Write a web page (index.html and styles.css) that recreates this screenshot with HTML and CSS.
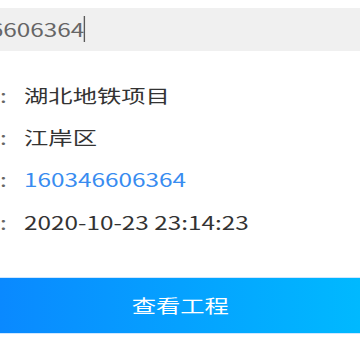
FILE: index.html
```html
<!DOCTYPE html>
<html lang="zh-CN">
<head>
<meta charset="utf-8">
<title>工程详情</title>
<link rel="stylesheet" href="styles.css">
</head>
<body>
<div class="page">
  <div class="search"><span class="search-text">160346606364</span></div>
  <div class="info">
    <div class="row"><span class="label">:</span><span class="value">湖北地铁项目</span></div>
    <div class="row"><span class="label">:</span><span class="value">江岸区</span></div>
    <div class="row"><span class="label">:</span><span class="value phone">160346606364</span></div>
    <div class="row"><span class="label">:</span><span class="value">2020-10-23 23:14:23</span></div>
  </div>
  <div class="btn">查看工程</div>
</div>
</body>
</html>
```
FILE: styles.css
```css
html, body {
  margin: 0;
  padding: 0;
  background: #ffffff;
  overflow: hidden;
}
.page {
  width: 267px;
  transform: scaleX(1.35);
  transform-origin: 0 0;
  font-family: "Noto Sans CJK SC", "Noto Sans", sans-serif;
  font-size: 18px;
}
.search {
  margin-top: 8px;
  height: 43px;
  line-height: 43px;
  background: #f0f0f0;
  white-space: nowrap;
  overflow: hidden;
  color: #666666;
}
.search-text {
  margin-left: -57.5px;
  border-right: 1.5px solid #5a5a5a;
}
.info {
  margin-top: 22.5px;
}
.row {
  display: flex;
  height: 42.4px;
  line-height: 42.4px;
  white-space: nowrap;
}
.label {
  width: 17.8px;
  color: #666666;
}
.value {
  color: #333333;
}
.phone {
  color: #388cf0;
}
.btn {
  margin-top: 34px;
  height: 55px;
  line-height: 55px;
  border-top: 1px solid #cfe7ff;
  border-bottom: 1px solid #cfe7ff;
  background: linear-gradient(90deg, #0a89ff 0%, #00b9ff 100%);
  color: #ffffff;
  text-align: center;
}
```
